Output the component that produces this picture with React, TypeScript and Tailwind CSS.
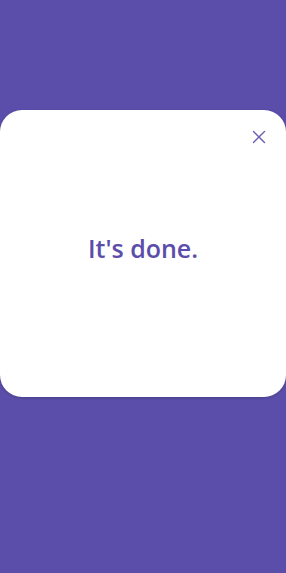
import React from "react";

export default function App() {
  return (
    <div className="w-[286px] h-[573px] bg-[#5b4eab] flex flex-col">
      <div className="h-[110px]" />
      <div className="relative h-[287px] bg-white rounded-[22px] shadow-[0_1px_3px_rgba(0,0,0,0.2)] flex items-center justify-center">
        <button className="absolute right-[20px] top-[20px] w-[14px] h-[14px] flex items-center justify-center">
          <svg width="14" height="14" viewBox="0 0 14 14" fill="none" stroke="#6a5fb5" strokeWidth="1.4" strokeLinecap="round">
            <path d="M1.5 1.5 L12.5 12.5 M12.5 1.5 L1.5 12.5" />
          </svg>
        </button>
        <div
          className="text-[#5b4eab] text-[25px] leading-none font-semibold mt-[-10px]"
          style={{ fontFamily: '"Open Sans", "Noto Sans", sans-serif' }}
        >
          It's done.
        </div>
      </div>
    </div>
  );
}
